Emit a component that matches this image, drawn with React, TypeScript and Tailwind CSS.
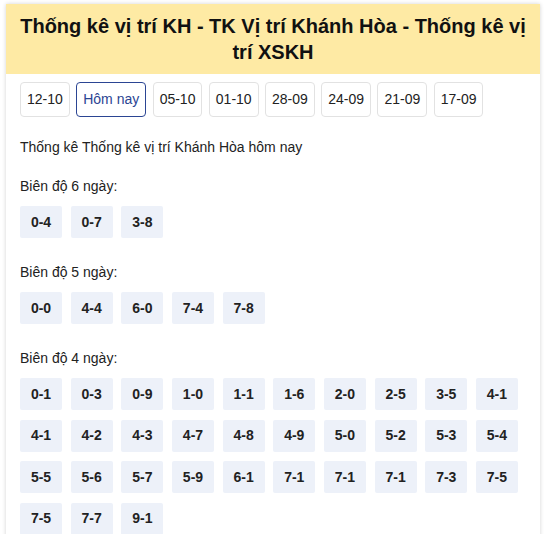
import React from "react";

const dates = ["12-10", "Hôm nay", "05-10", "01-10", "28-09", "24-09", "21-09", "17-09"];

const groups: { label: string; items: string[] }[] = [
  { label: "Biên độ 6 ngày:", items: ["0-4", "0-7", "3-8"] },
  { label: "Biên độ 5 ngày:", items: ["0-0", "4-4", "6-0", "7-4", "7-8"] },
  {
    label: "Biên độ 4 ngày:",
    items: [
      "0-1", "0-3", "0-9", "1-0", "1-1", "1-6", "2-0", "2-5", "3-5", "4-1",
      "4-1", "4-2", "4-3", "4-7", "4-8", "4-9", "5-0", "5-2", "5-3", "5-4",
      "5-5", "5-6", "5-7", "5-9", "6-1", "7-1", "7-1", "7-1", "7-3", "7-5",
      "7-5", "7-7", "9-1",
    ],
  },
];

export default function App() {
  return (
    <div
      className="w-[546px] h-[534px] overflow-hidden bg-white pt-[4px] px-[6px]"
      style={{ fontFamily: '"Liberation Sans", Arial, sans-serif' }}
    >
      <div className="bg-white shadow-[0_0_4px_rgba(0,0,0,0.18)] min-h-[600px]">
        <div className="bg-[#feeaa4] py-[9px] px-[4px] text-center text-[20px] leading-[26px] font-bold text-[#111]">
          Thống kê vị trí KH - TK Vị trí Khánh Hòa - Thống kê vị trí XSKH
        </div>
        <div className="px-[14px] pt-[8px]">
          <div className="flex gap-[6.4px]">
            {dates.map((d) => (
              <div
                key={d}
                className={
                  d === "Hôm nay"
                    ? "h-[35px] px-[6px] flex items-center rounded-[4px] border border-[#2b4593] text-[#2b4593] text-[14px]"
                    : "h-[35px] px-[6px] flex items-center rounded-[4px] border border-[#e2e2e2] text-[#222] text-[14px]"
                }
              >
                {d}
              </div>
            ))}
          </div>
          <div className="mt-[20px] text-[14px] leading-[20px] text-[#222]">
            Thống kê Thống kê vị trí Khánh Hòa hôm nay
          </div>
          {groups.map((g, gi) => (
            <div key={g.label} className={gi === 0 ? "mt-[19px]" : "mt-[24px]"}>
              <div className="text-[14px] leading-[20px] text-[#222]">{g.label}</div>
              <div className="mt-[10px] flex flex-wrap gap-x-[8.67px] gap-y-[9.5px]">
                {g.items.map((it, i) => (
                  <div
                    key={i}
                    className="w-[42px] h-[32px] flex items-center justify-center rounded-[2px] bg-[#edf1f9] text-[14px] font-bold text-[#222]"
                  >
                    {it}
                  </div>
                ))}
              </div>
            </div>
          ))}
        </div>
      </div>
    </div>
  );
}
